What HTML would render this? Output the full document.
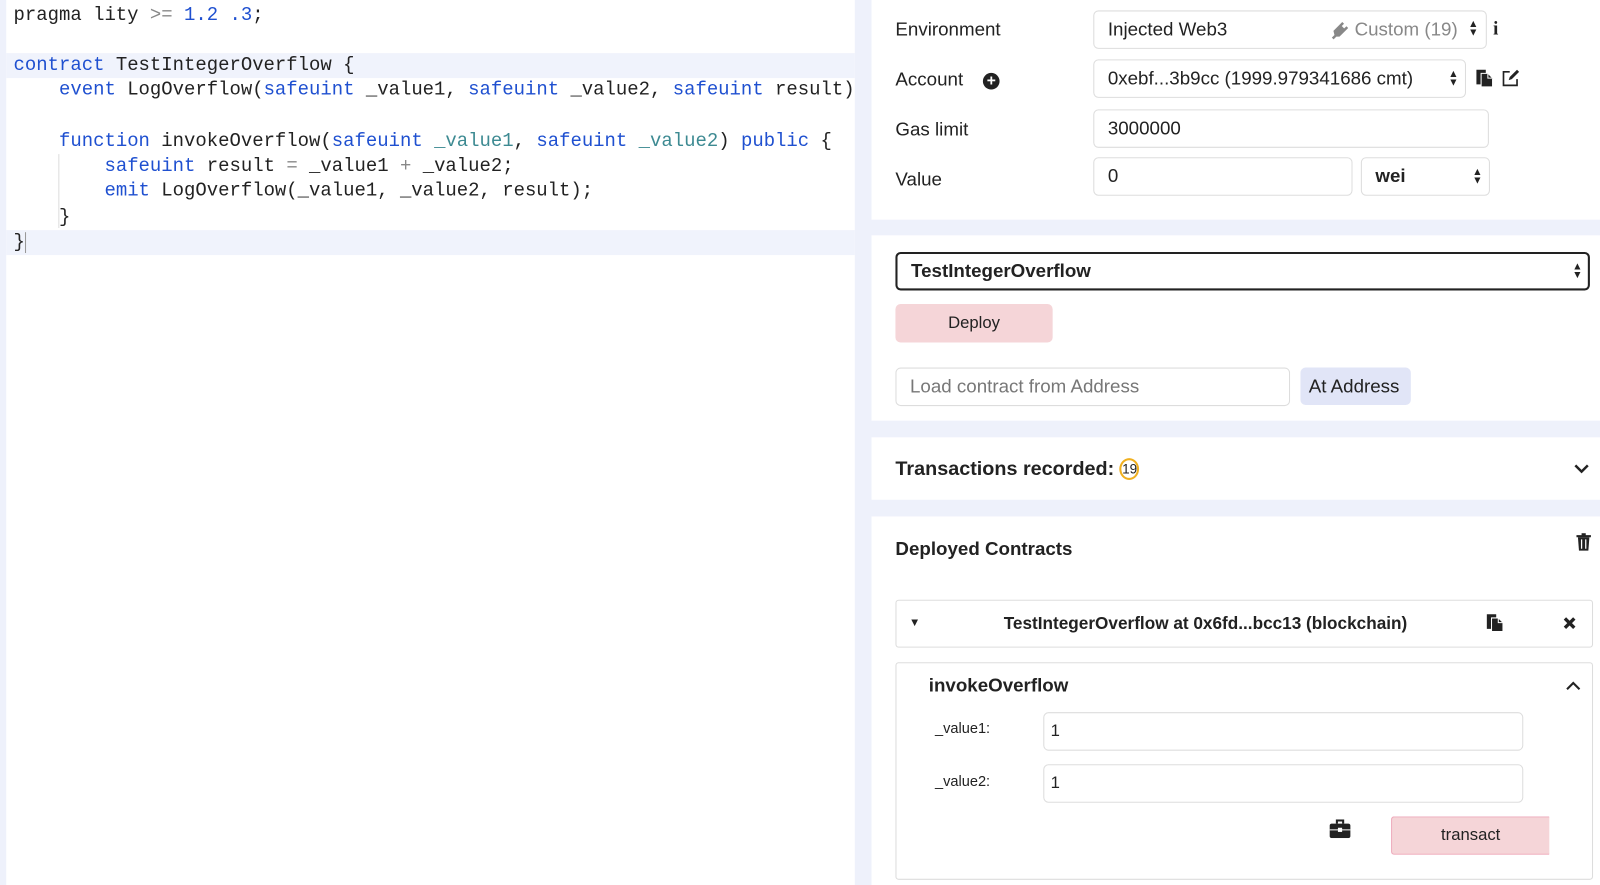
<!DOCTYPE html>
<html><head><meta charset="utf-8"><style>
*{box-sizing:border-box;margin:0;padding:0}
html,body{width:1600px;height:885px;overflow:hidden;background:#eef1fb}
#w{width:1568px;height:868px;transform:scale(1.0412);transform-origin:0 0;position:relative;font-family:"Liberation Sans",sans-serif;color:#222}
.ed{position:absolute;left:6px;top:0;width:815px;height:870px;background:#fff}
.ln{position:absolute;left:7px;height:24.3px;line-height:24.3px;font-family:"Liberation Mono",monospace;font-size:18.2px;white-space:pre;color:#222}
.hl{position:absolute;left:0;width:815px;height:24.3px;background:#f0f3fc}
.k{color:#1f50d0}.p{color:#3d8a92}.o{color:#888}
.card{position:absolute;left:837px;width:731px;background:#fff}
.lbl{position:absolute;font-size:18px;color:#222}
.box{position:absolute;border:1px solid #ddd;border-radius:5px;background:#fff;font-size:18px;padding-left:13px;display:flex;align-items:center}
.arr{position:absolute;font-size:10px;line-height:8px;text-align:center}
</style></head><body><div id="w">
<div class="ed">
<div class="hl" style="top:50.5px"></div>
<div class="hl" style="top:221px"></div>
<div class="ln" style="top:2.6px">pragma lity <span class="o">&gt;=</span> <span class="k">1.2</span> <span class="k">.3</span>;</div>
<div class="ln" style="top:50.5px"><span class="k">contract</span> TestIntegerOverflow {</div>
<div class="ln" style="top:75px">    <span class="k">event</span> LogOverflow(<span class="k">safeuint</span> _value1, <span class="k">safeuint</span> _value2, <span class="k">safeuint</span> result)</div>
<div class="ln" style="top:124px">    <span class="k">function</span> invokeOverflow(<span class="k">safeuint</span> <span class="p">_value1</span>, <span class="k">safeuint</span> <span class="p">_value2</span>) <span class="k">public</span> {</div>
<div class="ln" style="top:147.5px">        <span class="k">safeuint</span> result <span class="o">=</span> _value1 <span class="o">+</span> _value2;</div>
<div class="ln" style="top:172px">        <span class="k">emit</span> LogOverflow(_value1, _value2, result);</div>
<div class="ln" style="top:196.5px">    }</div>
<div class="ln" style="top:221px">}</div>
<div style="position:absolute;left:50px;top:148px;width:1px;height:71px;background:#ddd"></div>
<div style="position:absolute;left:18px;top:223px;width:1px;height:20px;background:#999"></div>
</div>

<div class="card" style="top:0;height:211px">
<div class="lbl" style="left:23px;top:18px">Environment</div>
<div class="box" style="left:213px;top:10px;width:378px;height:37px">Injected Web3<span style="position:absolute;left:250px;color:#888">Custom (19)</span>
<svg style="position:absolute;left:226px;top:10px" width="18" height="18" viewBox="0 0 18 18"><path d="M3 16 L6 13 M6 13 L5 9 L10 4 L14 8 L9 13 Z M10 4 L13 1 M14 8 L17 5" stroke="#888" stroke-width="2.4" fill="#888"/></svg></div>
<div class="arr" style="left:573px;top:20px">▲<br>▼</div>
<div class="lbl" style="left:597px;top:17px;font-weight:bold;font-family:'Liberation Serif'">i</div>
<div class="lbl" style="left:23px;top:66px">Account <span style="display:inline-block;width:16px;height:16px;border-radius:50%;background:#222;color:#fff;font-size:15px;line-height:16px;text-align:center;margin-left:14px;font-weight:bold">+</span></div>
<div class="box" style="left:213px;top:57px;width:358px;height:37px">0xebf...3b9cc (1999.979341686 cmt)</div>
<div class="arr" style="left:554px;top:68px">▲<br>▼</div>
<svg style="position:absolute;left:580px;top:66px" width="18" height="18" viewBox="0 0 18 18"><path d="M1 1 H10 V4 H5 V15 H1 Z" fill="#222"/><path d="M6 5 H12 L16 9 V17 H6 Z" fill="#222"/><path d="M12 5 V9 H16" stroke="#fff" fill="none"/></svg>
<svg style="position:absolute;left:605px;top:66px" width="18" height="18" viewBox="0 0 18 18"><path d="M8 3 H2 V16 H15 V10" stroke="#222" stroke-width="1.6" fill="none"/><path d="M7 11 L8 8 L15 1 L17 3 L10 10 Z" fill="#222"/></svg>
<div class="lbl" style="left:23px;top:114px">Gas limit</div>
<div class="box" style="left:213px;top:105px;width:380px;height:37px">3000000</div>
<div class="lbl" style="left:23px;top:162px">Value</div>
<div class="box" style="left:213px;top:151px;width:249px;height:37px">0</div>
<div class="box" style="left:470px;top:151px;width:124px;height:37px;font-weight:bold">wei</div>
<div class="arr" style="left:577px;top:162px">▲<br>▼</div>
</div>

<div class="card" style="top:226px;height:178px">
<div class="box" style="left:23px;top:16px;width:667px;height:37px;border:2px solid #222;font-weight:bold;font-size:18px">TestIntegerOverflow</div>
<div class="arr" style="left:673px;top:27px">▲<br>▼</div>
<div class="box" style="left:23px;top:66px;width:151px;height:37px;background:#f5d5d8;border:none;justify-content:center;padding:0;font-size:16px">Deploy</div>
<div class="box" style="left:23px;top:127px;width:379px;height:37px;color:#777">Load contract from Address</div>
<div class="box" style="left:412px;top:127px;width:106px;height:36px;background:#e1e5f7;border:none;padding-left:8px">At Address</div>
</div>

<div class="card" style="top:420px;height:60px">
<div class="lbl" style="left:23px;top:20px;font-weight:bold;font-size:19px">Transactions recorded: <span style="display:inline-block;width:19px;height:21px;border:2px solid #f0b020;border-radius:50%;font-size:13px;font-weight:normal;line-height:17px;text-align:center;vertical-align:middle">19</span></div>
<svg style="position:absolute;left:675px;top:25px" width="14" height="10" viewBox="0 0 14 10"><path d="M1 2 L7 8 L13 2" stroke="#222" stroke-width="2.4" fill="none"/></svg>
</div>

<div class="card" style="top:496px;height:372px">
<div class="lbl" style="left:23px;top:21px;font-weight:bold;font-size:18px">Deployed Contracts</div>
<svg style="position:absolute;left:677px;top:16px" width="14" height="17" viewBox="0 0 14 17"><path d="M0 3 H14 M5 1 H9" stroke="#222" stroke-width="2"/><path d="M1.5 4 H12.5 L11.5 17 H2.5 Z" fill="#222"/><path d="M5 6 V15 M9 6 V15" stroke="#fff" stroke-width="1.2"/></svg>
<div style="position:absolute;left:23px;top:80px;width:670px;height:46px;border:1px solid #ddd;border-radius:3px">
<div class="lbl" style="left:12px;top:15px;font-size:11px">▼</div>
<div class="lbl" style="left:103px;top:13px;font-weight:bold;font-size:16.5px">TestIntegerOverflow at 0x6fd...bcc13 (blockchain)</div>
<svg style="position:absolute;left:566px;top:12px" width="18" height="18" viewBox="0 0 18 18"><path d="M1 1 H10 V4 H5 V15 H1 Z" fill="#222"/><path d="M6 5 H12 L16 9 V17 H6 Z" fill="#222"/><path d="M12 5 V9 H16" stroke="#fff" fill="none"/></svg>
<svg style="position:absolute;left:640px;top:15px" width="13" height="13" viewBox="0 0 13 13"><path d="M2 2 L11 11 M11 2 L2 11" stroke="#222" stroke-width="3.2"/></svg>
</div>
<div style="position:absolute;left:23px;top:140px;width:670px;height:209px;border:1px solid #ddd;border-radius:3px">
<div class="lbl" style="left:31px;top:11px;font-weight:bold;font-size:18px">invokeOverflow</div>
<svg style="position:absolute;left:643px;top:17px" width="14" height="10" viewBox="0 0 14 10"><path d="M1 8 L7 2 L13 8" stroke="#222" stroke-width="2" fill="none"/></svg>
<div class="lbl" style="left:37px;top:54px;font-size:14px">_value1:</div>
<div class="box" style="left:141px;top:47px;width:461px;height:37px;padding-left:6px;font-size:16px">1</div>
<div class="lbl" style="left:37px;top:105px;font-size:14px">_value2:</div>
<div class="box" style="left:141px;top:97px;width:461px;height:37px;padding-left:6px;font-size:16px">1</div>
<svg style="position:absolute;left:416px;top:150px" width="20" height="18" viewBox="0 0 20 18"><path d="M7 4 V1 H13 V4" stroke="#222" stroke-width="2" fill="none"/><rect x="0" y="4" width="20" height="14" rx="2" fill="#222"/><path d="M0 10 H20" stroke="#fff"/><rect x="8" y="8" width="4" height="4" fill="#fff"/></svg>
<div class="box" style="left:475px;top:147px;width:152px;height:37px;background:#f5d5d8;border:1px solid #eab;border-right:none;border-radius:3px 0 0 3px;justify-content:center;padding:0;font-size:16px">transact</div>
</div>
</div>
</div></body></html>
